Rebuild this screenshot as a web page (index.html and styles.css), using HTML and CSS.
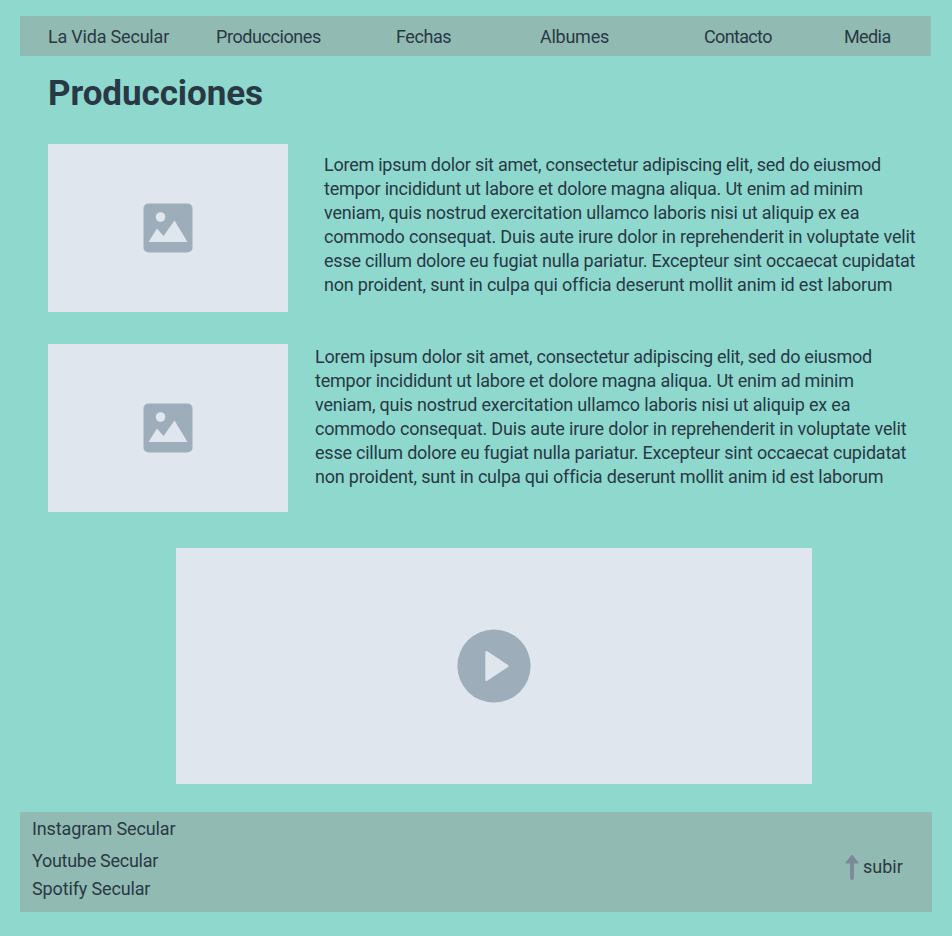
FILE: index.html
```
<!DOCTYPE html>
<html lang="es">
<head>
<meta charset="utf-8">
<title>Producciones</title>
<link rel="stylesheet" href="styles.css">
</head>
<body>
<nav class="nav">
  <a class="t-brand">La Vida Secular</a><a class="t-prod">Producciones</a><a class="t-dates">Fechas</a><a class="t-albums">Albumes</a><a class="t-contact">Contacto</a><a class="t-media">Media</a>
</nav>
<main class="main">
  <h1 class="title">Producciones</h1>
  <section class="item">
    <div class="photo">
      <svg width="50" height="50" viewBox="0 0 50 50"><rect x=".5" y=".5" width="49" height="49" rx="5" fill="#9eadba"/><circle cx="17.5" cy="14" r="4.8" fill="#dfe6ee"/><path d="M5.5 39 14 25.5 20.5 33 31.5 17.5 44.5 39Z" fill="#dfe6ee"/></svg>
    </div>
    <p class="copy">
      <span class="l1">Lorem ipsum dolor sit amet, consectetur adipiscing elit, sed do eiusmod</span>
      <span class="l2">tempor incididunt ut labore et dolore magna aliqua. Ut enim ad minim</span>
      <span class="l3">veniam, quis nostrud exercitation ullamco laboris nisi ut aliquip ex ea</span>
      <span class="l4">commodo consequat. Duis aute irure dolor in reprehenderit in voluptate velit</span>
      <span class="l5">esse cillum dolore eu fugiat nulla pariatur. Excepteur sint occaecat cupidatat</span>
      <span class="l6">non proident, sunt in culpa qui officia deserunt mollit anim id est laborum</span>
    </p>
  </section>
  <section class="item item-second">
    <div class="photo">
      <svg width="50" height="50" viewBox="0 0 50 50"><rect x=".5" y=".5" width="49" height="49" rx="5" fill="#9eadba"/><circle cx="17.5" cy="14" r="4.8" fill="#dfe6ee"/><path d="M5.5 39 14 25.5 20.5 33 31.5 17.5 44.5 39Z" fill="#dfe6ee"/></svg>
    </div>
    <p class="copy">
      <span class="l1">Lorem ipsum dolor sit amet, consectetur adipiscing elit, sed do eiusmod</span>
      <span class="l2">tempor incididunt ut labore et dolore magna aliqua. Ut enim ad minim</span>
      <span class="l3">veniam, quis nostrud exercitation ullamco laboris nisi ut aliquip ex ea</span>
      <span class="l4">commodo consequat. Duis aute irure dolor in reprehenderit in voluptate velit</span>
      <span class="l5">esse cillum dolore eu fugiat nulla pariatur. Excepteur sint occaecat cupidatat</span>
      <span class="l6">non proident, sunt in culpa qui officia deserunt mollit anim id est laborum</span>
    </p>
  </section>
  <div class="video">
    <svg width="74" height="74" viewBox="0 0 74 74"><circle cx="37" cy="37" r="36.6" fill="#9eadba"/><path d="M29.5 23.2 50.4 37 29.5 50.8Z" fill="#dfe6ee" stroke="#dfe6ee" stroke-width="2.4" stroke-linejoin="round"/></svg>
  </div>
</main>
<footer class="footer">
  <div class="social">
    <a class="t-insta">Instagram Secular</a>
    <a class="t-youtube">Youtube Secular</a>
    <a class="t-spotify">Spotify Secular</a>
  </div>
  <a class="up">
    <svg width="14" height="26" viewBox="0 0 14 26"><path d="M7 1.7 12.7 8.7H1.3Z" fill="#7b8b99" stroke="#7b8b99" stroke-width="1.6" stroke-linejoin="round"/><path d="M7 7V24" stroke="#7b8b99" stroke-width="4" stroke-linecap="round"/></svg>
    <span class="t-up">subir</span>
  </a>
</footer>
</body>
</html>
```
FILE: styles.css
```
* { box-sizing: border-box; }
body {
  margin: 0;
  height: 936px;
  padding: 16px 20px 24px;
  background: #8ed8ce;
  color: #293845;
  font: 18px/24px "Roboto", "Liberation Sans", sans-serif;
  white-space: nowrap;
}
.nav {
  display: grid;
  grid-template-columns: 168px 180px 144px 164px 140px 1fr;
  width: 911px;
  height: 40px;
  padding: 9px 0 0 28px;
  background: #91bbb2;
}
.main { padding: 17px 0 0 28px; }
.title {
  margin: 0;
  height: 71px;
  font-size: 35px;
  line-height: 42px;
  letter-spacing: -0.08px;
}
.item { display: flex; height: 168px; gap: 36px; margin-bottom: 32px; }
.item-second { gap: 27px; margin-bottom: 36px; }
.photo, .video { display: flex; align-items: center; justify-content: center; background: #dfe6ee; }
.photo { width: 240px; flex: none; }
.video { width: 636px; height: 236px; margin-left: 128px; }
.copy { margin: 0; padding-top: 9px; }
.item-second .copy { padding-top: 1px; }
.copy span { display: block; }
.l1 { letter-spacing: -0.243px; }
.l2 { letter-spacing: -0.212px; }
.l3 { letter-spacing: -0.185px; }
.l4 { letter-spacing: -0.187px; }
.l5 { letter-spacing: -0.227px; }
.l6 { letter-spacing: -0.192px; }
.footer {
  display: flex;
  justify-content: space-between;
  width: 912px;
  height: 100px;
  margin-top: 28px;
  padding: 5px 29px 0 12px;
  background: #91bbb2;
}
.social { display: flex; flex-direction: column; }
.t-insta { margin-bottom: 8px; }
.t-youtube { margin-bottom: 4px; }
.up { display: flex; width: 58px; gap: 4px; padding-top: 37px; }
.up svg { flex: none; }
.t-up { padding-top: 1px; letter-spacing: 0; }
.t-brand { letter-spacing: -0.2px; }
.t-prod { letter-spacing: -0.42px; }
.t-dates { letter-spacing: -0.42px; }
.t-albums { letter-spacing: -0.26px; }
.t-contact { letter-spacing: -0.65px; }
.t-media { letter-spacing: -0.6px; }
.t-insta { letter-spacing: -0.12px; }
.t-youtube { letter-spacing: -0.28px; }
.t-spotify { letter-spacing: -0.14px; }
```
